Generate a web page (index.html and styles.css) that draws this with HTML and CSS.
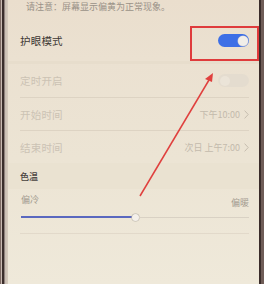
FILE: index.html
```html
<!DOCTYPE html>
<html lang="zh">
<head>
<meta charset="utf-8">
<link rel="stylesheet" href="styles.css">
</head>
<body>
<div class="device">
  <div class="bezel-l"></div>
  <div class="screen">
    <p class="note">请注意：屏幕显示偏黄为正常现象。</p>
    <div class="row main">
      <span class="label">护眼模式</span>
      <span class="switch on"><span class="knob"></span></span>
    </div>
    <div class="gap"></div>
    <div class="group">
      <div class="row dis">
        <span class="label">定时开启</span>
        <span class="switch off"><span class="knob"></span></span>
      </div>
      <div class="row dis line">
        <span class="label">开始时间</span>
        <span class="val">下午10:00<svg class="chev" viewBox="0 0 5 9"><path d="M0.6 0.6 L4.2 4.5 L0.6 8.4" /></svg></span>
      </div>
      <div class="row dis line">
        <span class="label">结束时间</span>
        <span class="val">次日 上午7:00<svg class="chev" viewBox="0 0 5 9"><path d="M0.6 0.6 L4.2 4.5 L0.6 8.4" /></svg></span>
      </div>
    </div>
    <div class="sec-head">色温</div>
    <div class="temp">
      <div class="ends"><span>偏冷</span><span class="warm">偏暖</span></div>
      <div class="slider">
        <div class="fill"></div>
        <div class="thumb"></div>
        <div class="rest"></div>
      </div>
      <div class="temp-line"></div>
    </div>
  </div>
  <div class="bezel-r"></div>
  <div class="mark-box"></div>
  <svg class="arrow" width="264" height="284" viewBox="0 0 264 284">
    <line x1="140" y1="196" x2="209" y2="80" />
    <polygon points="213,73 205,79 212,82" />
  </svg>
</div>
</body>
</html>
```

FILE: styles.css
```css
html, body {
  margin: 0;
  padding: 0;
}
body {
  width: 264px;
  height: 284px;
  overflow: hidden;
  background: #efe8d9;
  font-family: "Noto Sans CJK SC", "Noto Sans", sans-serif;
}
.device {
  position: relative;
  display: flex;
  width: 264px;
  height: 284px;
}
.bezel-l {
  width: 8px;
  flex: none;
  background: linear-gradient(to right,
    #7d6a64 0, #7d6a64 1px,
    #c9bab2 1px, #c9bab2 2px,
    #3a2d2b 2px, #3a2d2b 4px,
    #8e807b 4px, #8e807b 5px,
    #c7bcb2 5px, #d8ccbe 8px);
}
.bezel-r {
  width: 5px;
  flex: none;
  background: linear-gradient(to right,
    #d9cfc0 0, #d9cfc0 0.5px,
    #3a2c2a 0.5px, #3a2c2a 2.5px,
    #6f5c57 2.5px, #6f5c57 5px);
}
.screen {
  flex: 1;
  display: flex;
  flex-direction: column;
  background: linear-gradient(to bottom, #eadecd 0, #ebe1d1 60px, #ece4d4 160px, #efe9da 284px);
  padding: 0 10px 0 12px;
}
.note {
  margin: 0;
  height: 20px;
  line-height: 14px;
  padding-left: 6px;
  font-size: 9px;
  color: #9a9288;
  white-space: nowrap;
}
.row {
  display: flex;
  align-items: center;
  justify-content: space-between;
}
.main {
  height: 41px;
}
.label {
  font-size: 10.5px;
  letter-spacing: 0.2px;
}
.main .label {
  color: #3d3834;
}
.gap {
  height: 3px;
  margin: 0 -10px 0 -12px;
  background: #e7ddcc;
}
.group .row {
  height: 32px;
}
.group .row:first-child {
  height: 33px;
}
.dis .label {
  color: #cbc2b4;
}
.line {
  border-top: 1px solid #ddd3c3;
}
.switch {
  position: relative;
  display: block;
  width: 31px;
  height: 13px;
  border-radius: 7px;
}
.switch.on {
  background: #3d6fe6;
}
.switch.on .knob {
  position: absolute;
  right: 1.5px;
  top: 1.5px;
  width: 10px;
  height: 10px;
  border-radius: 50%;
  background: #f1eee9;
  box-shadow: 0 0 0 0.5px #b9bfd6;
}
.switch.off {
  background: #e4dccf;
}
.switch.off .knob {
  position: absolute;
  left: 1.5px;
  top: 1.5px;
  width: 10px;
  height: 10px;
  border-radius: 50%;
  background: #ebe4d8;
}
.val {
  display: flex;
  align-items: center;
  gap: 4px;
  font-size: 9px;
  color: #c3baac;
}
.chev {
  width: 5px;
  height: 9px;
}
.chev path {
  fill: none;
  stroke: #c6bdaf;
  stroke-width: 1;
}
.sec-head {
  margin: 0 -10px 0 -12px;
  padding-left: 12px;
  height: 26px;
  line-height: 27px;
  font-size: 9px;
  font-weight: 500;
  color: #48433e;
  background: #eae2d1;
}
.temp {
  display: flex;
  flex-direction: column;
}
.ends {
  display: flex;
  justify-content: space-between;
  font-size: 9px;
  color: #a39b90;
  height: 18px;
  margin-top: 3px;
  line-height: 16px;
}
.ends span:first-child {
  padding-left: 1px;
}
.warm {
  padding-top: 3px;
}
.slider {
  display: flex;
  align-items: center;
  height: 14px;
  padding-left: 1px;
}
.fill {
  width: 111px;
  height: 2px;
  background: #5a68bf;
}
.thumb {
  width: 7px;
  height: 7px;
  border-radius: 50%;
  background: #f4f0ea;
  box-shadow: 0 0 0 0.6px #b9b2a8;
  flex: none;
}
.rest {
  flex: 1;
  height: 1px;
  background: #d9d1c4;
}
.temp-line {
  margin-top: 9px;
  height: 1px;
  background: #e2d9ca;
}
.mark-box {
  position: absolute;
  left: 190px;
  top: 26px;
  width: 65px;
  height: 31px;
  border: 2px solid #df3b3c;
}
.arrow {
  position: absolute;
  left: 0;
  top: 0;
  pointer-events: none;
}
.arrow line {
  stroke: #e0403e;
  stroke-width: 1.5;
}
.arrow polygon {
  fill: #e0403e;
}
```
